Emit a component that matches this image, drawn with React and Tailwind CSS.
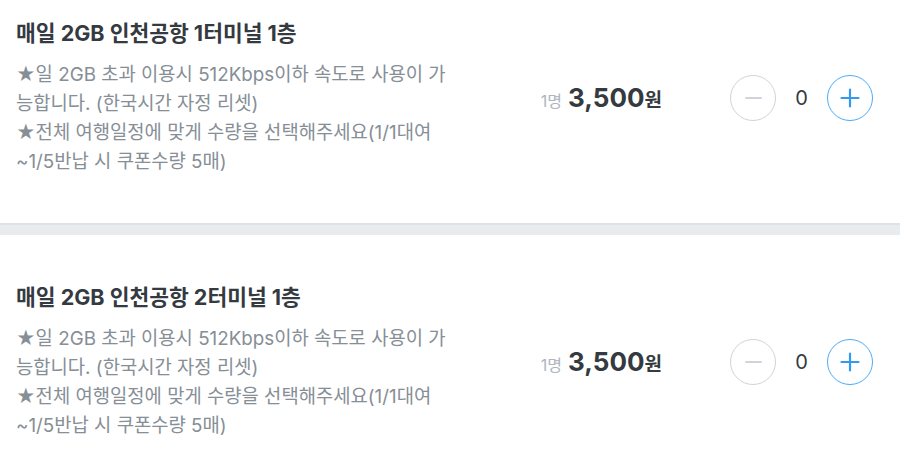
import React from "react";

const font = { fontFamily: 'Inter, "Noto Sans CJK KR", sans-serif' };

function Counter() {
  return (
    <div className="flex items-center">
      <button className="w-[46px] h-[46px] rounded-full border border-[#ced4da] flex items-center justify-center bg-white">
        <span className="block w-[17px] h-[2px] bg-[#ced4da] rounded" />
      </button>
      <span className="w-[51px] text-center text-[20px] text-[#343a40] leading-none">0</span>
      <button className="w-[46px] h-[46px] rounded-full border border-[#4dabf7] flex items-center justify-center bg-white">
        <svg width="20" height="20" viewBox="0 0 20 20">
          <path d="M10 1.5v17M1.5 10h17" stroke="#339af0" strokeWidth="2.2" strokeLinecap="round" />
        </svg>
      </button>
    </div>
  );
}

function Item({ title, top }) {
  return (
    <div className={`flex items-center bg-white pl-4 pr-[27px] ${top}`}>
      <div className="flex-1">
        <div className="text-[21.5px] font-bold text-[#343a40] leading-[28px]">{title}</div>
        <div className="mt-[13px] w-[437px] text-[18.8px] leading-[29px] text-[#868e96] break-all">
          <p>★일 2GB 초과 이용시 512Kbps이하 속도로 사용이 가능합니다. (한국시간 자정 리셋)</p>
          <p>
            ★전체 여행일정에 맞게 수량을 선택해주세요(1/1대여{" "}
            <span className="whitespace-nowrap">~1/5반납</span> 시 쿠폰수량 5매)
          </p>
        </div>
      </div>
      <div className="flex items-baseline mr-[68px]">
        <span className="text-[16px] text-[#adb5bd] mr-[6px]">1명</span>
        <span className="text-[26px] font-bold text-[#343a40]">3,500</span>
        <span className="text-[19px] font-semibold text-[#343a40]">원</span>
      </div>
      <Counter />
    </div>
  );
}

export default function App() {
  return (
    <div className="w-[900px] h-[465px] overflow-hidden bg-white" style={font}>
      <Item title="매일 2GB 인천공항 1터미널 1층" top="pt-[19px] pb-[47px]" />
      <div className="h-[12px] bg-[#e9ecef] border-t-2 border-[#dee2e6]" />
      <Item title="매일 2GB 인천공항 2터미널 1층" top="pt-[48px] pb-[47px]" />
    </div>
  );
}
